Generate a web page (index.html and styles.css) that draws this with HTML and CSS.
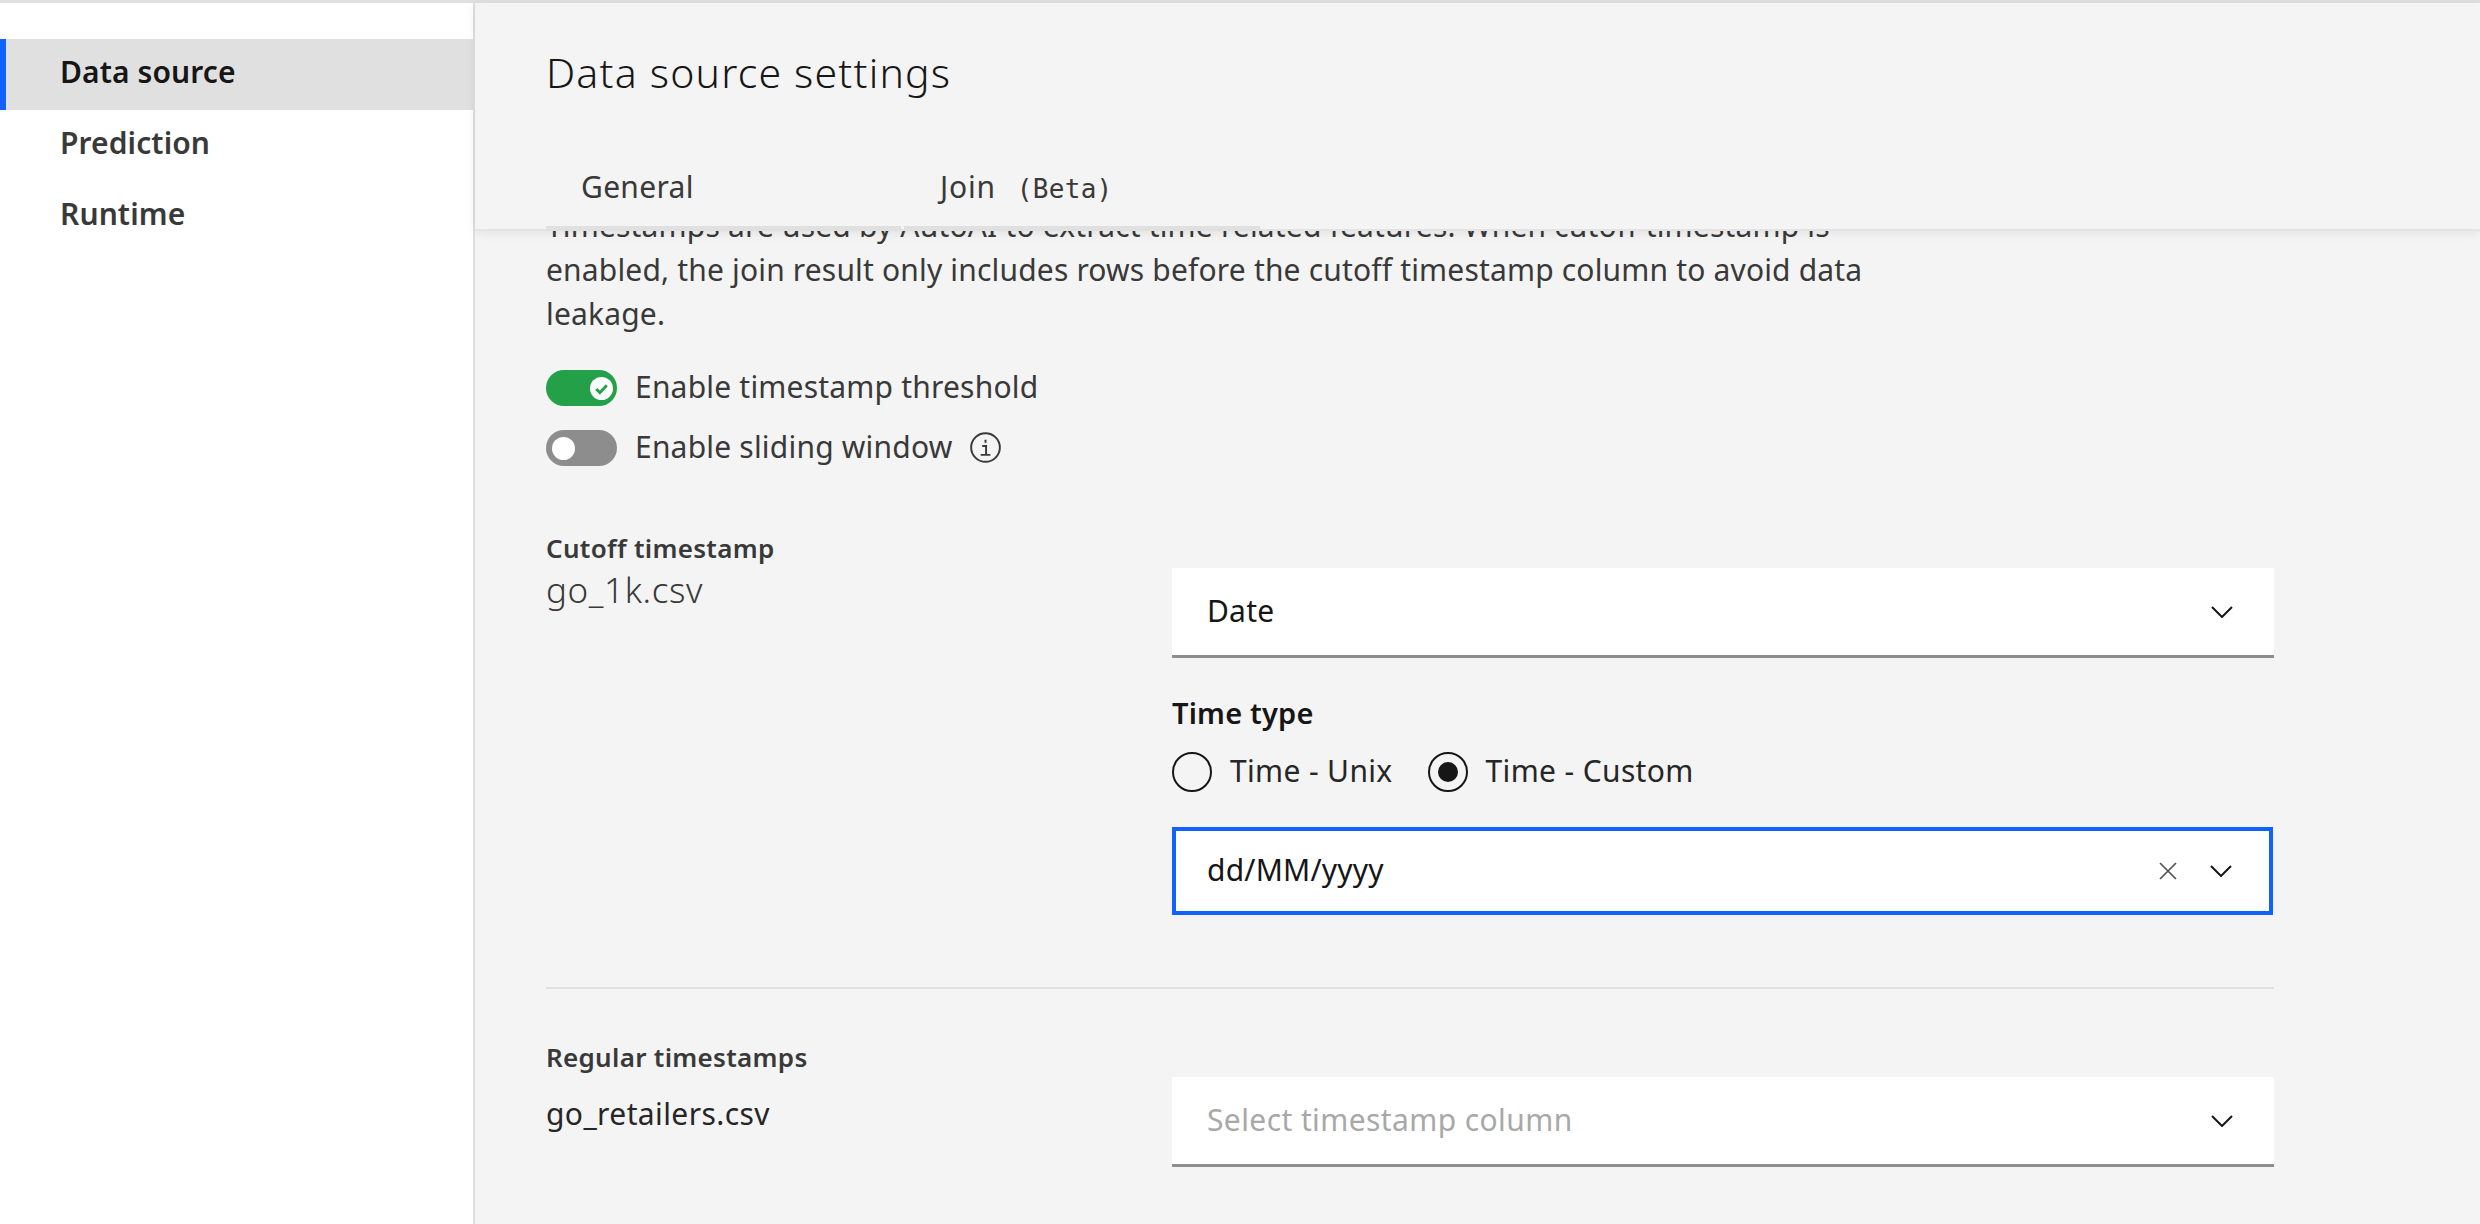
FILE: index.html
```html
<!DOCTYPE html>
<html lang="en">
<head>
<meta charset="utf-8">
<title>Data source settings</title>
<link rel="stylesheet" href="styles.css">
</head>
<body>
<div class="app">
  <nav class="sidebar">
    <a class="nav-item active">Data source</a>
    <a class="nav-item">Prediction</a>
    <a class="nav-item">Runtime</a>
  </nav>
  <main class="main">
    <header class="header">
      <h1 class="title">Data source settings</h1>
      <div class="tabs">
        <span class="tab tab-general">General</span>
        <span class="tab tab-join">Join<span class="beta">(Beta)</span></span>
      </div>
    </header>
    <section class="scroll">
      <p class="desc">Timestamps are used by AutoAI to extract time related features. When cutoff timestamp is enabled, the join result only includes rows before the cutoff timestamp column to avoid data leakage.</p>
      <div class="toggle-row">
        <span class="toggle on">
          <svg class="knob-check" viewBox="0 0 24 24"><circle cx="12" cy="12" r="12" fill="#fff"/><path d="M6.5 12.5l3.8 3.8 7.2-7.6" fill="none" stroke="#24a148" stroke-width="3"/></svg>
        </span>
        <span class="toggle-label">Enable timestamp threshold</span>
      </div>
      <div class="toggle-row second">
        <span class="toggle off"><span class="knob"></span></span>
        <span class="toggle-label">Enable sliding window</span>
        <svg class="info" viewBox="0 0 32 32"><circle cx="16" cy="16" r="14.8" fill="none" stroke="#393939" stroke-width="2"/><path d="M16 8v3.2M12.6 14.4h4v9M11 23.6h10" fill="none" stroke="#393939" stroke-width="2"/></svg>
      </div>
      <div class="row cutoff">
        <div class="row-left">
          <div class="row-title">Cutoff timestamp</div>
          <div class="row-file big">go_1k.csv</div>
        </div>
        <div class="row-right">
          <div class="select">
            <span class="value">Date</span>
            <svg class="chev" viewBox="0 0 22 12"><path d="M1 1l10 10L21 1" fill="none" stroke="#161616" stroke-width="2"/></svg>
          </div>
          <div class="time-title">Time type</div>
          <div class="radios">
            <span class="radio"></span><span class="radio-label">Time - Unix</span>
            <span class="radio checked"></span><span class="radio-label">Time - Custom</span>
          </div>
          <div class="select focused">
            <span class="value">dd/MM/yyyy</span>
            <svg class="clear" viewBox="0 0 18 18"><path d="M1 1l16 16M17 1L1 17" fill="none" stroke="#525252" stroke-width="1.7"/></svg>
            <svg class="chev" viewBox="0 0 22 12"><path d="M1 1l10 10L21 1" fill="none" stroke="#161616" stroke-width="2"/></svg>
          </div>
        </div>
      </div>
      <hr class="divider">
      <div class="row regular">
        <div class="row-left">
          <div class="row-title">Regular timestamps</div>
          <div class="row-file">go_retailers.csv</div>
        </div>
        <div class="row-right">
          <div class="select">
            <span class="value placeholder">Select timestamp column</span>
            <svg class="chev" viewBox="0 0 22 12"><path d="M1 1l10 10L21 1" fill="none" stroke="#161616" stroke-width="2"/></svg>
          </div>
        </div>
      </div>
    </section>
  </main>
</div>
</body>
</html>
```
FILE: styles.css
```css
* { box-sizing: border-box; }
html, body { margin: 0; height: 100%; }
body {
  font-family: "Noto Sans", "Liberation Sans", sans-serif;
  color: #393939;
  background: #f4f4f4;
  overflow: hidden;
  letter-spacing: .2px;
}
.app {
  display: flex;
  height: 1224px;
  border-top: 3px solid #e0e0e0;
}
.sidebar {
  width: 475px;
  flex: none;
  background: #fff;
  border-right: 2px solid #e0e0e0;
  padding-top: 36px;
}
.nav-item {
  display: flex;
  align-items: center;
  height: 71px;
  padding: 0 0 6px 60px;
  font-size: 30px;
  font-weight: 600;
  letter-spacing: .1px;
  color: #393939;
}
.nav-item.active {
  background: #e0e0e0;
  color: #161616;
  border-left: 6px solid #0f62fe;
  padding-left: 54px;
}
.main {
  flex: 1;
  min-width: 0;
  display: flex;
  flex-direction: column;
  background: #f4f4f4;
}
.header {
  height: 228px;
  flex: none;
  position: relative;
  z-index: 1;
  background: #f4f4f4;
  border-bottom: 2px solid #e4e4e4;
  box-shadow: 0 2px 10px rgba(0,0,0,.08);
  padding: 44px 0 0 71px;
}
.title {
  margin: 0;
  font-size: 41px;
  line-height: 50px;
  font-weight: 300;
  letter-spacing: 1.2px;
  color: #161616;
}
.tabs {
  display: flex;
  margin-top: 66px;
}
.tab {
  font-size: 30px;
  line-height: 47px;
  color: #393939;
  height: 68px;
  padding-left: 35px;
  border-bottom: 5px solid #e0e0e0;
}
.tab-general { width: 355px; margin-right: 3px; letter-spacing: .3px; padding-left: 35px; }
.tab-join { width: 356px; letter-spacing: .8px; padding-left: 36px; }
.beta {
  font-family: "DejaVu Sans Mono", "Liberation Mono", monospace;
  font-size: 26px;
  letter-spacing: .3px;
  margin-left: 21px;
}
.scroll {
  flex: 1;
  overflow: hidden;
  padding: 0 206px 0 71px;
}
.desc {
  width: 1330px;
  margin: -27px 0 0;
  font-size: 30px;
  line-height: 44px;
  letter-spacing: .17px;
}
.toggle-row {
  display: flex;
  align-items: center;
  height: 38px;
  margin-top: 33px;
}
.toggle-row.second { margin-top: 22px; }
.toggle {
  width: 71px;
  height: 36px;
  border-radius: 18px;
  flex: none;
  display: flex;
  align-items: center;
}
.toggle.on { background: #24a148; justify-content: flex-end; padding-right: 4px; }
.toggle.off { background: #8d8d8d; padding-left: 6px; }
.knob { width: 23px; height: 23px; border-radius: 50%; background: #fff; }
.knob-check { width: 23px; height: 23px; }
.toggle-label { margin-left: 18px; font-size: 30px; padding-bottom: 3px; }
.info { width: 31px; height: 31px; margin: 0 0 2px 18px; }
.row { display: flex; }
.row-left { width: 626px; flex: none; margin-top: -36px; }
.row-right { flex: 1; min-width: 0; }
.cutoff { margin-top: 101px; }
.row-title { font-size: 26px; font-weight: 600; line-height: 32px; letter-spacing: .3px; color: #393939; }
.row-file { font-size: 30px; line-height: 40px; letter-spacing: .4px; color: #262626; margin-top: 21px; }
.row-file.big { font-size: 35px; font-weight: 300; margin-top: 6px; letter-spacing: .6px; color: #393939; }
.select {
  display: flex;
  align-items: center;
  height: 90px;
  background: #fff;
  border-bottom: 3px solid #8d8d8d;
  padding: 0 41px 0 35px;
  font-size: 30px;
  color: #161616;
}
.value { flex: 1; padding-bottom: 3px; }
.placeholder { color: #a8a8a8; letter-spacing: .4px; }
.chev { width: 22px; height: 12px; flex: none; }
.clear { width: 18px; height: 18px; flex: none; margin-right: 33px; }
.time-title { font-size: 29px; font-weight: 600; color: #161616; line-height: 40px; margin-top: 35px; }
.radios {
  display: flex;
  align-items: center;
  margin-top: 17px;
  font-size: 30px;
  letter-spacing: .35px;
  color: #262626;
}
.radio {
  width: 40px;
  height: 40px;
  border-radius: 50%;
  border: 2.5px solid #161616;
  flex: none;
  display: flex;
  align-items: center;
  justify-content: center;
}
.radio.checked::after {
  content: "";
  width: 20px;
  height: 20px;
  border-radius: 50%;
  background: #161616;
}
.radio-label { margin: 0 35px 0 18px; padding-bottom: 2px; }
.focused {
  margin-top: 34px;
  height: 88px;
  border: 4px solid #0f62fe;
  padding: 0 37px 0 31px;
  width: 1101px;
}
.divider {
  border: 0;
  height: 2px;
  background: #e0e0e0;
  margin: 72px 0 0;
}
.regular { margin-top: 88px; }
```
